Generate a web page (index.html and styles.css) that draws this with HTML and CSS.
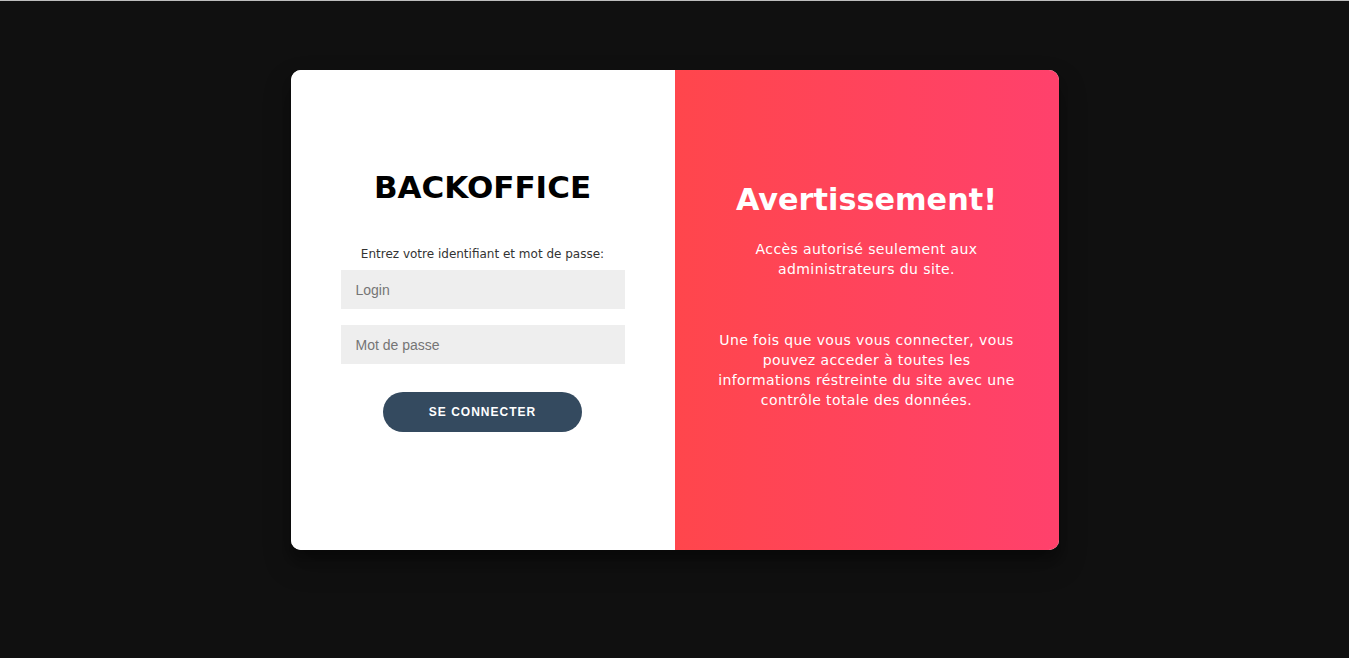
FILE: index.html
```html
<!DOCTYPE html>
<html lang="fr">
<head>
<meta charset="utf-8">
<title>Backoffice</title>
<link rel="stylesheet" href="styles.css">
</head>
<body>
<div class="page">
  <div class="card">
    <form class="login" action="#">
      <h1 class="login-title">BACKOFFICE</h1>
      <span class="login-hint">Entrez votre identifiant et mot de passe:</span>
      <input class="field" type="text" placeholder="Login">
      <input class="field" type="password" placeholder="Mot de passe">
      <button class="btn" type="button">Se connecter</button>
    </form>
    <div class="notice">
      <h1 class="notice-title">Avertissement!</h1>
      <p class="notice-text notice-first">Accès autorisé seulement aux administrateurs du site.</p>
      <p class="notice-text notice-second">Une fois que vous vous connecter, vous pouvez acceder à toutes les informations réstreinte du site avec une contrôle totale des données.</p>
    </div>
  </div>
</div>
</body>
</html>
```
FILE: styles.css
```css
* { box-sizing: border-box; }
html, body { margin: 0; padding: 0; }
body {
  background: #101010;
  border-top: 1px solid #bdbdbd;
  height: 658px;
  overflow: hidden;
  font-family: "DejaVu Sans", sans-serif;
}
.page {
  display: flex;
  justify-content: center;
  padding-top: 69px;
}
.card {
  width: 768px;
  height: 480px;
  border-radius: 10px;
  overflow: hidden;
  display: flex;
  background: #fff;
  box-shadow: 0 14px 28px rgba(0,0,0,0.25), 0 10px 10px rgba(0,0,0,0.22);
}
.login {
  width: 384px;
  height: 100%;
  background: #fff;
  display: flex;
  flex-direction: column;
  align-items: center;
  justify-content: center;
  padding: 0 50px 20px;
  text-align: center;
}
.login-title {
  margin: 0 0 40px;
  font-size: 31px;
  font-weight: 800;
  line-height: 38px;
  color: #000;
}
.login-hint {
  font-size: 12px;
  color: #333;
  line-height: 16px;
  margin-bottom: 8px;
}
.field {
  width: 100%;
  height: 39px;
  background: #eee;
  border: none;
  padding: 12px 15px;
  margin: 0 0 16px;
  font-family: "Liberation Sans", Arial, sans-serif;
  font-size: 14px;
  outline: none;
}
.field::placeholder { color: #757575; }
.btn {
  margin-top: 12px;
  width: 199px;
  height: 40px;
  border-radius: 20px;
  border: none;
  background: #344a5f;
  color: #fff;
  font-family: "Liberation Sans", Arial, sans-serif;
  font-size: 12px;
  font-weight: bold;
  letter-spacing: 1px;
  text-transform: uppercase;
}
.notice {
  width: 384px;
  height: 100%;
  background: linear-gradient(to right, #ff464c, #ff416c);
  color: #fff;
  display: flex;
  flex-direction: column;
  align-items: center;
  justify-content: center;
  padding: 0 40px 30px;
  text-align: center;
}
.notice-title {
  margin: 0;
  font-size: 30.3px;
  font-weight: 800;
  line-height: 40px;
}
.notice-text {
  margin: 0;
  font-size: 14px;
  line-height: 20px;
  letter-spacing: 0.4px;
  font-weight: 400;
}
.notice-first { margin-top: 19px; }
.notice-second { margin-top: 51px; }
```
